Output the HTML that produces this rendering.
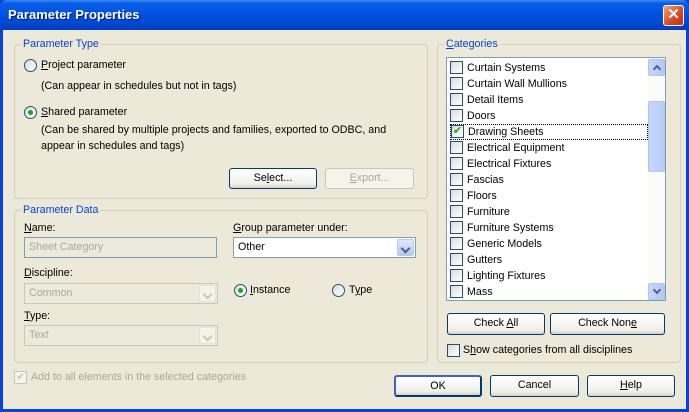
<!DOCTYPE html>
<html><head><style>
*{margin:0;padding:0;box-sizing:border-box}
body{width:689px;height:412px;overflow:hidden;background:#0842d6;font-family:"Liberation Sans",sans-serif;font-size:10.7px;color:#000;position:relative}
.a{position:absolute;white-space:nowrap}
#title{left:0;top:0;width:689px;height:30px;background:linear-gradient(#3d8bf5 0,#0a5fe6 3px,#0054e3 12px,#0048d0 24px,#003cc0 30px);border-radius:7px 7px 0 0}
#tt{left:8px;top:7px;color:#fff;font-weight:bold;font-size:13px;text-shadow:1px 1px #0a1e7a}
#x{left:663px;top:5px;width:21px;height:21px;background:linear-gradient(135deg,#f0a080,#d84820 60%,#c23010);border:1px solid #fff;border-radius:3px;color:#fff;font-weight:bold;font-size:15px;text-align:center;line-height:18px}
#body{left:3px;top:30px;width:683px;height:379px;background:#ece9d8}
.grp{position:absolute;border:1px solid #d0d0bf;border-radius:4px}
.lg{position:absolute;background:#ece9d8;color:#0046d5;padding:0 2px;top:-7px;left:6px}
.rad{position:absolute;width:13px;height:13px;border-radius:50%;border:1px solid #1c5180;background:linear-gradient(135deg,#dcdcd4,#fff)}
.rad.on::after{content:"";position:absolute;left:3px;top:3px;width:5px;height:5px;border-radius:50%;background:#21a121}
.btn{position:absolute;border:1px solid #003c74;border-radius:3px;background:linear-gradient(#fff,#f0f0ea 80%,#d6d0c5);text-align:center;line-height:19px}
.btn.dis{border-color:#c9c7ba;color:#aca899;background:#f5f4ea}
.fld{position:absolute;border:1px solid #7f9db9;background:#fff;padding-left:4px;line-height:19px}
.fld.dis{background:#ebeadb;color:#aca899;border-color:#c9c7ba}
.fld.dis2{border-color:#7f9db9;background:#ebeadb;color:#aca899}
.dd{position:absolute;right:1px;top:1px;width:17px;bottom:1px;border-radius:2px;background:linear-gradient(#e0e8fd,#b4c8f6);border:1px solid #b9cbf3}
.dd::after{content:"";position:absolute;left:4px;top:5px;width:5px;height:5px;border-right:2px solid #4d6185;border-bottom:2px solid #4d6185;transform:rotate(45deg)}
.dd.g{background:#f5f4ea;border-color:#e4e2d6}.dd.g::after{border-color:#c9c7ba}
.cb{position:absolute;width:13px;height:13px;border:1px solid #1c5180;background:linear-gradient(135deg,#dcdcd4,#fff)}
u{text-decoration:underline}
#list{left:443px;top:27px;width:220px;height:244px;border:1px solid #7f9db9;background:#fff;overflow:hidden}
.it{position:absolute;left:3px;height:16px;line-height:16px}
.it .cb{left:0;top:1px}
.it span{position:absolute;left:16px;top:0;padding:0 1px}
#sb{position:absolute;right:0;top:0;width:17px;height:242px;background:#fbfbf8}
.sbb{position:absolute;left:0;width:17px;height:17px;border-radius:2px;background:linear-gradient(90deg,#c8d6fb,#b2c7f6);border:1px solid #b0c4ef}
.sbb::after{content:"";position:absolute;left:5px;width:4px;height:4px;border-right:2px solid #4d6185;border-bottom:2px solid #4d6185}
</style></head><body>
<div class="a" id="title"></div>
<div class="a" id="tt">Parameter Properties</div>
<div class="a" id="x">✕</div>
<div class="a" id="body">
 <div class="grp" style="left:11px;top:14px;width:414px;height:155px"><div class="lg">Parameter Type</div></div>
 <div class="rad" style="left:21px;top:29px"></div>
 <div class="a" style="left:38px;top:29px"><u>P</u>roject parameter</div>
 <div class="a" style="left:38px;top:50px">(Can appear in schedules but not in tags)</div>
 <div class="rad on" style="left:21px;top:76px"></div>
 <div class="a" style="left:38px;top:76px"><u>S</u>hared parameter</div>
 <div class="a" style="left:38px;top:94px">(Can be shared by multiple projects and families, exported to ODBC, and</div>
 <div class="a" style="left:38px;top:110px">appear in schedules and tags)</div>
 <div class="btn" style="left:226px;top:138px;width:88px;height:21px">Se<u>l</u>ect...</div>
 <div class="btn dis" style="left:322px;top:138px;width:89px;height:21px"><u>E</u>xport...</div>

 <div class="grp" style="left:11px;top:180px;width:414px;height:153px"><div class="lg">Parameter Data</div></div>
 <div class="a" style="left:21px;top:192px"><u>N</u>ame:</div>
 <div class="fld dis2" style="left:21px;top:207px;width:193px;height:21px">Sheet Category</div>
 <div class="a" style="left:230px;top:192px"><u>G</u>roup parameter under:</div>
 <div class="fld" style="left:230px;top:207px;width:183px;height:21px">Other<div class="dd"></div></div>
 <div class="a" style="left:21px;top:237px"><u>D</u>iscipline:</div>
 <div class="fld dis" style="left:21px;top:253px;width:194px;height:21px">Common<div class="dd g"></div></div>
 <div class="rad on" style="left:231px;top:254px"></div>
 <div class="a" style="left:247px;top:254px"><u>I</u>nstance</div>
 <div class="rad" style="left:329px;top:254px"></div>
 <div class="a" style="left:346px;top:254px">T<u>y</u>pe</div>
 <div class="a" style="left:21px;top:280px"><u>T</u>ype:</div>
 <div class="fld dis" style="left:21px;top:295px;width:194px;height:21px">Text<div class="dd g"></div></div>
 <div class="cb" style="left:11px;top:341px;border-color:#c9c7ba;background:#f5f4ea;color:#c9c7ba;font-size:10px;line-height:11px;text-align:center">✔</div>
 <div class="a" style="left:28px;top:341px;color:#aca899">Add to all elements in the selected categories</div>

 <div class="grp" style="left:434px;top:14px;width:244px;height:319px"><div class="lg"><u>C</u>ategories</div></div>
 <div class="a" id="list">
  <div class="it" style="top:2px"><div class="cb"></div><span>Curtain Systems</span></div>
  <div class="it" style="top:18px"><div class="cb"></div><span>Curtain Wall Mullions</span></div>
  <div class="it" style="top:34px"><div class="cb"></div><span>Detail Items</span></div>
  <div class="it" style="top:50px"><div class="cb"></div><span>Doors</span></div>
  <div class="it" style="top:66px;width:198px;border:1px dotted #000;left:3px"><div class="cb" style="color:#21a121;font-size:11px;line-height:11px;text-align:center;top:0">✔</div><span style="top:-1px">Drawing Sheets</span></div>
  <div class="it" style="top:82px"><div class="cb"></div><span>Electrical Equipment</span></div>
  <div class="it" style="top:98px"><div class="cb"></div><span>Electrical Fixtures</span></div>
  <div class="it" style="top:114px"><div class="cb"></div><span>Fascias</span></div>
  <div class="it" style="top:130px"><div class="cb"></div><span>Floors</span></div>
  <div class="it" style="top:146px"><div class="cb"></div><span>Furniture</span></div>
  <div class="it" style="top:162px"><div class="cb"></div><span>Furniture Systems</span></div>
  <div class="it" style="top:178px"><div class="cb"></div><span>Generic Models</span></div>
  <div class="it" style="top:194px"><div class="cb"></div><span>Gutters</span></div>
  <div class="it" style="top:210px"><div class="cb"></div><span>Lighting Fixtures</span></div>
  <div class="it" style="top:226px"><div class="cb"></div><span>Mass</span></div>
  <div class="it" style="top:242px"><div class="cb"></div><span></span></div>
  <div id="sb">
   <div class="sbb" style="top:1px;"></div>
   <div style="position:absolute;left:0;top:43px;width:17px;height:71px;border-radius:2px;background:linear-gradient(90deg,#c8d6fb,#b9ccf8);border:1px solid #b0c4ef"></div>
   <div class="sbb" style="top:225px"></div>
  </div>
 </div>
 <div class="btn" style="left:444px;top:283px;width:98px;height:22px">Check <u>A</u>ll</div>
 <div class="btn" style="left:547px;top:283px;width:115px;height:22px">Check Non<u>e</u></div>
 <div class="cb" style="left:444px;top:314px"></div>
 <div class="a" style="left:460px;top:314px">S<u>h</u>ow categories from all disciplines</div>

 <div class="btn" style="left:391px;top:345px;width:88px;height:22px;border-width:2px;border-color:#3c62c6 #003c74 #003c74 #3c62c6;line-height:18px">OK</div>
 <div class="btn" style="left:487px;top:345px;width:89px;height:22px">Cancel</div>
 <div class="btn" style="left:584px;top:345px;width:88px;height:22px"><u>H</u>elp</div>
</div>
<style>#sb .sbb:first-child::after{top:6px;transform:rotate(-135deg)}#sb .sbb:last-child::after{top:3px;transform:rotate(45deg)}</style>
</body></html>
